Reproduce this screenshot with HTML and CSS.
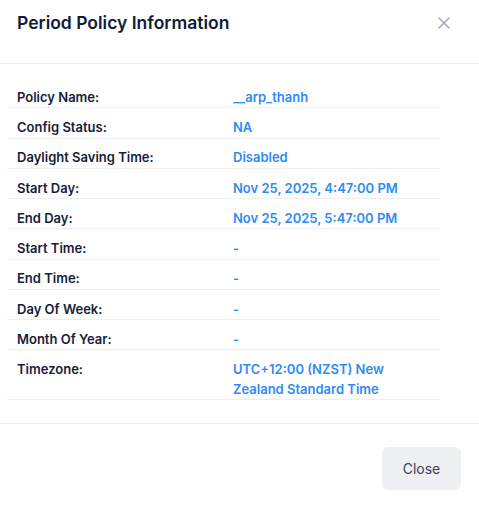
FILE: index.html
```html
<!DOCTYPE html>
<html lang="en">
<head>
    <meta charset="UTF-8">
    <meta name="viewport" content="width=device-width, initial-scale=1.0">
    <title>Period Policy Information</title>
    <link rel="stylesheet" href="styles.css">
</head>
<body>
    <div class="modal">
        <div class="modal-header">
            <h2 class="modal-title">Period Policy Information</h2>
            <button class="modal-close" aria-label="Close">
                <svg width="12" height="12" viewBox="0 0 12 12">
                    <path d="M1 1L11 11M11 1L1 11" stroke="currentColor" stroke-width="1.5" stroke-linecap="round"/>
                </svg>
            </button>
        </div>

        <div class="modal-body">
            <table class="info">
                <tr><td class="label">Policy Name:</td><td class="value">__arp_thanh</td></tr>
                <tr><td class="label">Config Status:</td><td class="value">NA</td></tr>
                <tr><td class="label">Daylight Saving Time:</td><td class="value">Disabled</td></tr>
                <tr><td class="label">Start Day:</td><td class="value">Nov 25, 2025, 4:47:00 PM</td></tr>
                <tr><td class="label">End Day:</td><td class="value">Nov 25, 2025, 5:47:00 PM</td></tr>
                <tr><td class="label">Start Time:</td><td class="value">-</td></tr>
                <tr><td class="label">End Time:</td><td class="value">-</td></tr>
                <tr><td class="label">Day Of Week:</td><td class="value">-</td></tr>
                <tr><td class="label">Month Of Year:</td><td class="value">-</td></tr>
                <tr><td class="label">Timezone:</td><td class="value">UTC+12:00 (NZST) New Zealand Standard Time</td></tr>
            </table>
        </div>

        <div class="modal-footer">
            <button class="btn">Close</button>
        </div>
    </div>
</body>
</html>
```

FILE: styles.css
```css
body{
    margin: 0;
    background: #fff;
    font-family: Inter, "Noto Sans", sans-serif;
}

.modal{
    width: 479px;
}

.modal-header{
    display: flex;
    align-items: flex-start;
    justify-content: space-between;
    height: 64px;
    padding: 0 29px 0 17px;
    box-sizing: border-box;
    border-bottom: 1px solid #ededef;
}
.modal-title{
    margin: 12px 0 0;
    font-size: 17.5px;
    font-weight: 600;
    line-height: 22px;
    color: #111a3a;
}
.modal-close{
    margin-top: 17px;
    padding: 0;
    border: 0;
    background: none;
    color: #a1a7b9;
    width: 12px;
    height: 12px;
    display: flex;
}

.modal-body{
    padding: 14px 39px 23px 7px;
}

.info{
    width: 100%;
    border-collapse: collapse;
    font-size: 13px;
    font-weight: 600;
    line-height: 19.5px;
}
.info td{
    padding: 9.75px 10px 0;
    border-bottom: 1px solid #eceef1;
    vertical-align: top;
}
.info .label{
    width: 196px;
    color: #161d3a;
}
.info .value{
    color: #2f8bf5;
}

.modal-footer{
    display: flex;
    justify-content: flex-end;
    padding: 23px 18px 17px;
    border-top: 1px solid #ededef;
}
.btn{
    width: 79px;
    height: 43px;
    border: 0;
    border-radius: 6px;
    background: #eff0f3;
    color: #3a4258;
    font-family: inherit;
    font-size: 14px;
}
```
